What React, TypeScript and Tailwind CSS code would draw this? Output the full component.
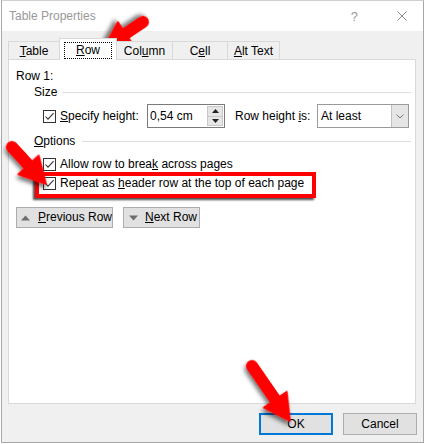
import React from "react";

const Check = () => (
  <span className="flex h-[13px] w-[13px] shrink-0 items-center justify-center border border-[#333333] bg-white">
    <svg width="11" height="11" viewBox="0 0 11 11">
      <path d="M1.5 5.5 L4 8.2 L9.6 2.2" stroke="#333333" strokeWidth="1.1" fill="none" />
    </svg>
  </span>
);

const Tri = ({ down }: { down?: boolean }) => (
  <svg width="9" height="6" viewBox="0 0 9 6" className="shrink-0">
    <path d={down ? "M0 0.5 H9 L4.5 5.5 Z" : "M0 5.5 H9 L4.5 0.5 Z"} fill="#6e6e6e" />
  </svg>
);

type ArrowProps = { x1: number; y1: number; x2: number; y2: number };

const Arrow = ({ x1, y1, x2, y2 }: ArrowProps) => {
  const dx = x2 - x1;
  const dy = y2 - y1;
  const len = Math.sqrt(dx * dx + dy * dy);
  const deg = (Math.atan2(dy, dx) * 180) / Math.PI;
  return (
    <g transform={`translate(${x1} ${y1}) rotate(${deg})`} filter="url(#shadow)">
      <line x1="0" y1="0" x2={len - 20} y2="0" stroke="#ff0000" strokeWidth="12" strokeLinecap="round" />
      <path d={`M${len - 26} -14 L${len} 0 L${len - 26} 14 Z`} fill="#ff0000" strokeLinejoin="round" stroke="#ff0000" strokeWidth="1.5" />
    </g>
  );
};

const Tab = ({ label, u, rest, w, active }: { label: string; u: string; rest: string; w: string; active?: boolean }) =>
  active ? (
    <div className={`relative z-10 -ml-px flex h-[22px] items-start justify-center border border-b-0 border-[#d9d9d9] bg-white pt-[3px] ${w}`}>
      <span className="whitespace-nowrap border border-dotted border-black px-[11px] leading-[15px]">
        {label}
        <u>{u}</u>
        {rest}
      </span>
    </div>
  ) : (
    <div className={`-ml-px flex h-[19px] items-center justify-center border border-[#d9d9d9] bg-[#f0f0f0] pt-px first:ml-0 ${w}`}>
      <span className="whitespace-nowrap">
        {label}
        <u>{u}</u>
        {rest}
      </span>
    </div>
  );

export default function App() {
  return (
    <div className="relative h-[444px] w-[425px] overflow-hidden bg-white font-['Liberation_Sans',Arial,sans-serif] text-[12px] leading-[15px] text-black">
      <div className="flex">
        <div className="h-[443px] w-px" />
        <div className="flex h-[443px] w-[423px] flex-col border border-[#a8a8a8] border-t-[#d0d0d0] bg-[#f0f0f0]">
          {/* title bar */}
          <div className="flex h-[30px] items-center bg-white pl-[7px] pr-[16px] text-[#999999]">
            <span>Table Properties</span>
            <span className="ml-auto text-[13px]">?</span>
            <svg width="10" height="10" viewBox="0 0 10 10" className="ml-[39px]">
              <path d="M0.5 0.5 L9.5 9.5 M9.5 0.5 L0.5 9.5" stroke="#8a8a8a" strokeWidth="1" />
            </svg>
          </div>

          {/* tabs */}
          <div className="relative z-10 -mb-px flex items-end pl-[6px] pt-[7px]">
            <Tab label="" u="T" rest="able" w="w-[52px]" />
            <Tab label="" u="R" rest="ow" w="w-[58px]" active />
            <Tab label="Col" u="u" rest="mn" w="w-[57px]" />
            <Tab label="C" u="e" rest="ll" w="w-[56px]" />
            <Tab label="" u="A" rest="lt Text" w="w-[53px]" />
          </div>

          {/* panel */}
          <div className="ml-[6px] flex h-[345px] w-[408px] flex-col border border-[#d9d9d9] bg-white">
            <div className="pl-[7px] pt-[9px]">Row 1:</div>

            <div className="ml-[25px] mr-[4px] mt-px flex h-[15px] items-center">
              <span>Size</span>
              <span className="ml-[5px] h-px flex-1 bg-[#dcdcdc]" />
            </div>

            <div className="mt-[4px] flex h-[24px] items-center pl-[34px]">
              <Check />
              <span className="ml-[4px] w-[87px] whitespace-nowrap">
                <u>S</u>pecify height:
              </span>
              <div className="flex h-[24px] w-[78px] border border-[#7a7a7a] bg-white">
                <span className="flex flex-1 items-center pl-[2px]">0,54 cm</span>
                <div className="my-px mr-px flex w-[16px] flex-col border border-[#c8c8c8] bg-[#e6e6e6]">
                  <div className="flex flex-1 items-center justify-center border-b border-[#c8c8c8]">
                    <svg width="7" height="4" viewBox="0 0 7 4">
                      <path d="M0 4 H7 L3.5 0 Z" fill="#222" />
                    </svg>
                  </div>
                  <div className="flex flex-1 items-center justify-center">
                    <svg width="7" height="4" viewBox="0 0 7 4">
                      <path d="M0 0 H7 L3.5 4 Z" fill="#222" />
                    </svg>
                  </div>
                </div>
              </div>
              <span className="ml-[10px] w-[82px] whitespace-nowrap">
                Row height <u>i</u>s:
              </span>
              <div className="flex h-[24px] w-[92px] border border-[#9a9a9a] bg-white">
                <span className="flex flex-1 items-center pl-[3px]">At least</span>
                <div className="flex w-[17px] items-center justify-center border-l border-[#c0c0c0] bg-[#e5e5e5]">
                  <svg width="8" height="5" viewBox="0 0 8 5">
                    <path d="M0.5 0.5 L4 4 L7.5 0.5" stroke="#777" strokeWidth="1" fill="none" />
                  </svg>
                </div>
              </div>
            </div>

            <div className="ml-[25px] mr-[4px] mt-[6px] flex h-[15px] items-center">
              <span>
                <u>O</u>ptions
              </span>
              <span className="ml-[7px] h-px flex-1 bg-[#dcdcdc]" />
            </div>

            <div className="mt-[7px] flex h-[16px] items-center pl-[34px]">
              <Check />
              <span className="ml-[4px] whitespace-nowrap">
                Allow row to brea<u>k</u> across pages
              </span>
            </div>
            <div className="mt-[3px] flex h-[16px] items-center pl-[34px]">
              <Check />
              <span className="ml-[4px] whitespace-nowrap">
                Repeat as <u>h</u>eader row at the top of each page
              </span>
            </div>

            <div className="mt-[16px] flex gap-[10px] pl-[7px]">
              <button className="flex h-[21px] w-[97px] items-center border border-[#adadad] bg-[#e1e1e1] pl-[4px]">
                <Tri />
                <span className="ml-[8px] whitespace-nowrap">
                  <u>P</u>revious Row
                </span>
              </button>
              <button className="flex h-[21px] w-[77px] items-center border border-[#adadad] bg-[#e1e1e1] pl-[5px]">
                <Tri down />
                <span className="ml-[7px] whitespace-nowrap">
                  <u>N</u>ext Row
                </span>
              </button>
            </div>
          </div>

          {/* footer buttons */}
          <div className="mt-[9px] flex justify-end gap-[10px] pr-[6px]">
            <button className="h-[22px] w-[74px] border-2 border-[#0078d7] bg-[#e1e1e1]">OK</button>
            <button className="h-[22px] w-[74px] border border-[#adadad] bg-[#e1e1e1]">Cancel</button>
          </div>
        </div>
      </div>

      {/* annotations */}
      <div className="absolute left-[35px] top-[172px] h-[26px] w-[281px] border-4 border-[#ff0000] shadow-[-2px_2px_2px_rgba(0,0,0,0.7)]" />
      <svg className="pointer-events-none absolute left-0 top-0" width="425" height="444">
        <defs>
          <filter id="shadow" x="-50%" y="-50%" width="200%" height="200%">
            <feDropShadow dx="2" dy="3" stdDeviation="2" floodColor="#000" floodOpacity="0.55" />
          </filter>
        </defs>
        <Arrow x1={143} y1={22} x2={104} y2={48} />
        <Arrow x1={12} y1={147} x2={46} y2={184} />
        <Arrow x1={252} y1={366} x2={290} y2={421} />
      </svg>
    </div>
  );
}
